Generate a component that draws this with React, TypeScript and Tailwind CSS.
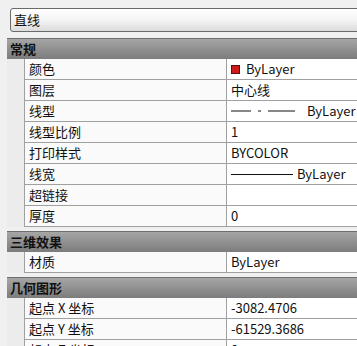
import React from 'react';

type Row = { label: string; value: React.ReactNode };

const font = { fontFamily: '"Noto Sans CJK SC", "Liberation Sans", sans-serif' };

function LineDash() {
  return (
    <svg width="66" height="6" className="shrink-0">
      <line x1="0" y1="3" x2="20" y2="3" stroke="#111" strokeWidth="1" />
      <line x1="27" y1="3" x2="30" y2="3" stroke="#111" strokeWidth="1" />
      <line x1="37" y1="3" x2="64" y2="3" stroke="#111" strokeWidth="1" />
    </svg>
  );
}

const general: Row[] = [
  {
    label: '颜色',
    value: (
      <span className="flex items-center gap-[6px]">
        <span className="w-[9px] h-[9px] bg-[#d01a1a] border border-[#5a1010]" />
        ByLayer
      </span>
    ),
  },
  { label: '图层', value: '中心线' },
  {
    label: '线型',
    value: (
      <span className="flex items-center gap-[10px]">
        <LineDash />
        ByLayer
      </span>
    ),
  },
  { label: '线型比例', value: '1' },
  { label: '打印样式', value: 'BYCOLOR' },
  {
    label: '线宽',
    value: (
      <span className="flex items-center gap-[4px]">
        <span className="w-[62px] h-px bg-[#111]" />
        ByLayer
      </span>
    ),
  },
  { label: '超链接', value: '' },
  { label: '厚度', value: '0' },
];

const effects: Row[] = [{ label: '材质', value: 'ByLayer' }];

const geometry: Row[] = [
  { label: '起点 X 坐标', value: '-3082.4706' },
  { label: '起点 Y 坐标', value: '-61529.3686' },
  { label: '起点 Z 坐标', value: '0' },
];

function Section({ title, rows }: { title: string; rows: Row[] }) {
  return (
    <div className="mb-[4px]">
      <div className="h-[21px] flex items-center pl-[3px] font-bold text-[13px] text-[#111] border-t border-[#6e6e6e] bg-gradient-to-b from-[#a6a6a6] to-[#7c7c7c]">
        {title}
      </div>
      {rows.map((r) => (
        <div key={r.label} className="flex h-[21px] text-[13px] text-[#111]">
          <div className="w-[17px] shrink-0 bg-[#ececec]" />
          <div className="w-[202px] shrink-0 flex items-center pl-[4px] bg-[#fafafa] border-l border-b border-[#a0a0a0]">
            {r.label}
          </div>
          <div className="flex-1 flex items-center pl-[4px] bg-white border-l border-b border-[#a0a0a0]">
            {r.value}
          </div>
        </div>
      ))}
    </div>
  );
}

export default function App() {
  return (
    <div className="w-[357px] h-[346px] overflow-hidden bg-[#f0f0f0]" style={font}>
      <div className="pt-[8px] pl-[10px] -mr-[4px]">
        <div className="h-[24px] flex items-center pl-[3px] text-[13px] text-[#111] border border-[#6a6a6a] rounded-[3px] bg-gradient-to-b from-white via-[#f4f4f4] to-[#dcdcdc]">
          直线
        </div>
      </div>
      <div className="pl-[7px] pt-[6px]">
        <Section title="常规" rows={general} />
        <Section title="三维效果" rows={effects} />
        <Section title="几何图形" rows={geometry} />
      </div>
    </div>
  );
}
